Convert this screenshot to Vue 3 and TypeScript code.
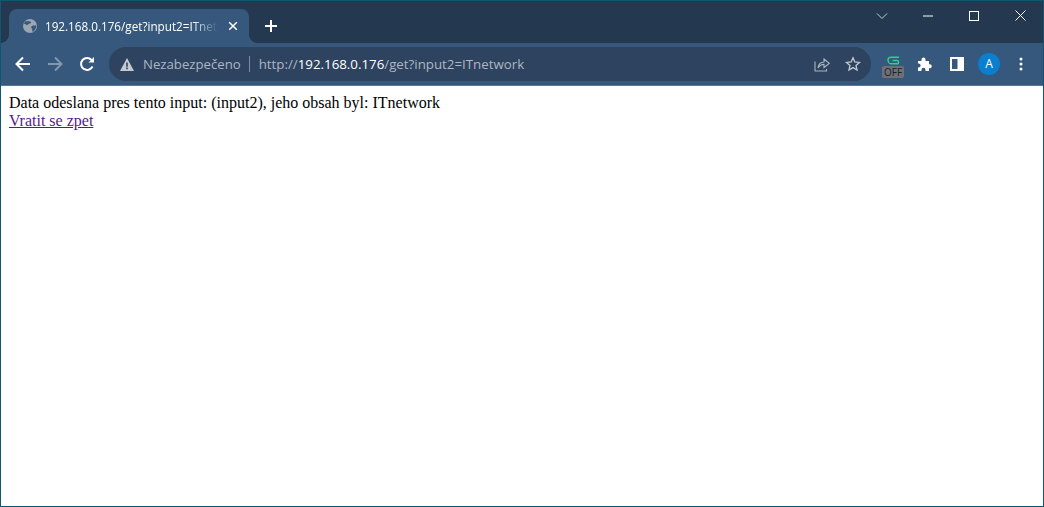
<script setup lang="ts">
const message: string = 'Data odeslana pres tento input: (input2), jeho obsah byl: ITnetwork'
const linkText: string = 'Vratit se zpet'
</script>

<template>
  <div class="window">
    <header class="tabstrip">
      <div class="tab">
        <svg class="globe" width="16" height="16" viewBox="0 0 16 16">
          <circle cx="8" cy="8" r="7" fill="#9aa5b1" />
          <path d="M3 3.500C5 3 6.500 3.200 8.500 3.600 9.500 4.200 9 5.400 7.600 5.600 6.400 5.800 6.200 7 5.200 7 4 7 3 6 2 5.600Z" fill="#35587c" />
          <path d="M14.400 7.600C13 7.600 11 7.400 9.600 8.200 8.800 9 9.400 10 10 10.600 10.400 11.600 10.200 13 10.600 14 12.600 13 14 11 14.400 7.600Z" fill="#35587c" />
        </svg>
        <span class="tab-title">192.168.0.176/get?input2=ITnetwork</span>
        <svg class="tab-close" width="10" height="10" viewBox="0 0 10 10">
          <path d="M1.200 1.200 8.800 8.800M8.800 1.200 1.200 8.800" stroke="#fff" stroke-width="1.500" fill="none" />
        </svg>
      </div>
      <svg class="new-tab" width="14" height="14" viewBox="0 0 14 14">
        <path d="M7 1v12M1 7h12" stroke="#fff" stroke-width="2" fill="none" />
      </svg>
      <div class="caption">
        <svg class="cap chevron" width="12" height="8" viewBox="0 0 12 8">
          <path d="M1 1.500 6 6.500 11 1.500" stroke="#c8ced6" stroke-width="1" fill="none" />
        </svg>
        <svg class="cap minimize" width="10" height="2" viewBox="0 0 10 2">
          <path d="M0 1h10" stroke="#fff" stroke-width="1" fill="none" />
        </svg>
        <svg class="cap maximize" width="10" height="10" viewBox="0 0 10 10">
          <rect x=".5" y=".5" width="9" height="9" stroke="#fff" stroke-width="1" fill="none" />
        </svg>
        <svg class="cap close" width="11" height="11" viewBox="0 0 11 11">
          <path d="M.5.5 10.500 10.500M10.500.5.5 10.500" stroke="#fff" stroke-width="1" fill="none" />
        </svg>
      </div>
    </header>

    <nav class="toolbar">
      <svg class="nav-btn" width="16" height="16" viewBox="0 0 16 16">
        <path d="M15 8H2M8 1.500 1.500 8 8 14.500" stroke="#fff" stroke-width="2" fill="none" />
      </svg>
      <svg class="nav-btn" width="16" height="16" viewBox="0 0 16 16">
        <path d="M1 8H14M8 1.500 14.500 8 8 14.500" stroke="#8497ad" stroke-width="2" fill="none" />
      </svg>
      <svg class="nav-btn" width="16" height="16" viewBox="0 0 16 16">
        <path d="M13.500 10.500A6 6 0 1 1 12.600 4" stroke="#fff" stroke-width="2" fill="none" />
        <path d="M9.500 6.500H15V1Z" fill="#fff" />
      </svg>

      <div class="omnibox">
        <svg class="warn" width="14" height="13" viewBox="0 0 14 13">
          <path d="M7 0 14 13H0Z" fill="#c5cad1" />
          <path d="M6.200 4.500h1.600v4.200H6.200ZM6.200 9.600h1.600v1.600H6.200Z" fill="#2d435f" />
        </svg>
        <span class="security">Nezabezpečeno</span>
        <span class="divider"></span>
        <span class="url"><span class="dim">http://</span><span class="host">192.168.0.176</span><span class="dim">/get?input2=ITnetwork</span></span>
        <svg class="share" width="16" height="16" viewBox="0 0 16 16">
          <path d="M1 5.500V15H12.500V13" stroke="#aab3bf" stroke-width="1.100" fill="none" />
          <path d="M4 12C4.400 8 7 6.200 10 6V3l5.200 4.400L10 11.500V8.400C7.500 8.400 5.500 9.600 4 12Z" stroke="#aab3bf" stroke-width="1.100" fill="none" />
        </svg>
        <svg class="star" width="16" height="16" viewBox="0 0 16 16">
          <path d="M8 1.800 9.800 6 14.500 6.400 11 9.400 12 14 8 11.600 4 14 5 9.400 1.500 6.400 6.200 6Z" stroke="#c5cad1" stroke-width="1.300" fill="none" />
        </svg>
      </div>

      <div class="extensions">
        <div class="grammar">
          <svg width="13" height="9" viewBox="0 0 13 9">
            <path d="M12 1.200H4C2 1.200 1 2.500 1 4S2 7.800 4 7.800H10.500C12 7.800 12 4.500 10 4.500H5.500" stroke="#2fd18c" stroke-width="1.400" fill="none" />
          </svg>
          <span class="off">OFF</span>
        </div>
        <svg class="puzzle" width="16" height="16" viewBox="0 0 16 16">
          <path d="M1 5h3.500V3.500a2 2 0 0 1 4 0V5H12v3.300h.8a2 2 0 0 1 0 4H12V15H8.500v-1.200a2 2 0 0 0-4 0V15H1v-3.500h.6a2 2 0 0 0 0-4H1Z" fill="#fff" />
        </svg>
        <svg class="panel" width="14" height="14" viewBox="0 0 14 14">
          <path fill-rule="evenodd" d="M0 0h14v14H0ZM2 2v10h5.500V2Z" fill="#fff" />
        </svg>
        <div class="avatar">A</div>
        <svg class="menu" width="4" height="14" viewBox="0 0 4 14">
          <circle cx="2" cy="2" r="1.500" fill="#fff" />
          <circle cx="2" cy="7" r="1.500" fill="#fff" />
          <circle cx="2" cy="12" r="1.500" fill="#fff" />
        </svg>
      </div>
    </nav>

    <main class="page">
      <div>{{ message }}</div>
      <a class="back" href="#">{{ linkText }}</a>
    </main>
  </div>
</template>

<style>
html, body {
  margin: 0;
  background: #fff;
}
</style>

<style scoped>
.window {
  box-sizing: border-box;
  width: 1044px;
  height: 507px;
  border: 1px solid #0f5673;
  display: flex;
  flex-direction: column;
  background: #fff;
  overflow: hidden;
}

.tabstrip {
  flex: 0 0 42px;
  display: flex;
  align-items: flex-end;
  padding-left: 8px;
  background: #24384f;
  font-family: "Open Sans", "Noto Sans", sans-serif;
}

.tab {
  position: relative;
  box-sizing: border-box;
  width: 240px;
  height: 34px;
  display: flex;
  align-items: center;
  padding: 0 11px 0 13px;
  background: #35587c;
  border-radius: 8px 8px 0 0;
}

.tab::before,
.tab::after {
  content: "";
  position: absolute;
  bottom: 0;
  width: 8px;
  height: 8px;
  background: radial-gradient(circle at 0 0, #24384f 7.500px, #35587c 8px);
}

.tab::before {
  left: -8px;
}

.tab::after {
  right: -8px;
  background: radial-gradient(circle at 100% 0, #24384f 7.500px, #35587c 8px);
}

.tab-title {
  flex: 1;
  min-width: 0;
  margin-left: 7px;
  font-size: 11.700px;
  line-height: 16px;
  color: #fff;
  white-space: nowrap;
  overflow: hidden;
  -webkit-mask-image: linear-gradient(to right, #000 85%, transparent 100%);
  mask-image: linear-gradient(to right, #000 85%, transparent 100%);
}

.tab-close {
  margin-left: 10px;
}

.new-tab {
  margin: 0 0 10px 15px;
}

.caption {
  margin-left: auto;
  align-self: flex-start;
  display: flex;
  align-items: center;
  height: 29px;
}

.cap {
  flex: none;
}

.chevron {
  margin-right: 35px;
}

.minimize {
  margin-right: 36px;
}

.maximize {
  margin-right: 36px;
}

.close {
  margin-right: 17px;
}

.toolbar {
  flex: 0 0 43px;
  box-sizing: border-box;
  display: flex;
  align-items: center;
  padding-left: 14px;
  background: #35587c;
  border-bottom: 1px solid #5b7690;
}

.nav-btn {
  flex: none;
  margin-right: 16px;
}

.omnibox {
  box-sizing: border-box;
  width: 762px;
  height: 34px;
  margin-left: -2px;
  display: flex;
  align-items: center;
  padding: 0 10px 0 11px;
  background: #2d435f;
  border-radius: 17px;
  font-family: "Open Sans", "Noto Sans", sans-serif;
}

.security {
  margin-left: 9px;
  color: #aeb6c1;
  font-size: 13.200px;
}

.divider {
  width: 1px;
  height: 16px;
  margin: 0 9px 0 8px;
  background: #7e8c9c;
}

.url {
  flex: 1;
  white-space: nowrap;
  font-size: 13.300px;
}

.dim {
  color: #aeb6c1;
}

.host {
  color: #fff;
}

.share {
  margin-right: 15px;
}

.extensions {
  display: flex;
  align-items: center;
  margin-left: 11px;
}

.grammar {
  width: 22px;
  display: flex;
  flex-direction: column;
  align-items: center;
  gap: 1px;
  margin-top: 6px;
}

.off {
  box-sizing: border-box;
  width: 22px;
  height: 12px;
  background: #6d7176;
  border-radius: 2px;
  color: #1c1f22;
  font: 400 10px/12px "Open Sans", sans-serif;
  text-align: center;
}

.puzzle {
  margin-left: 13px;
}

.panel {
  margin-left: 17px;
}

.avatar {
  width: 22px;
  height: 22px;
  margin-left: 14px;
  border-radius: 50%;
  background: #0a7fd0;
  color: #fff;
  font: 12px/22px "Open Sans", sans-serif;
  text-align: center;
}

.menu {
  margin-left: 19px;
}

.page {
  flex: 1;
  padding: 8px;
  font-family: "Liberation Serif", serif;
  font-size: 16px;
  line-height: 18px;
  color: #000;
}

.back {
  color: #551a8b;
  text-decoration: underline;
}
</style>
